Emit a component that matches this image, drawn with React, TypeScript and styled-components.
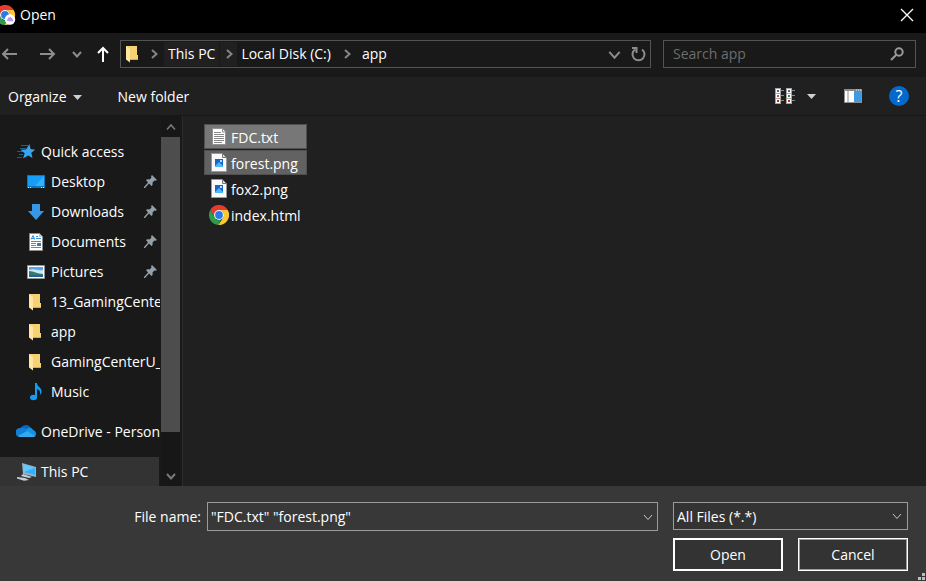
import React from "react";
import styled, { createGlobalStyle } from "styled-components";

const GlobalStyle = createGlobalStyle`
  * { box-sizing: border-box; }
  body { margin: 0; background: #202020; }
  body, button, input, select {
    font-family: "Segoe UI", "Open Sans", "Noto Sans", sans-serif;
    font-size: 14px;
    line-height: 20px;
    color: #fff;
  }
  svg { display: block; flex: none; }
`;

const Dialog = styled.div`
  display: flex;
  flex-direction: column;
  min-height: 100vh;
  position: relative;
  overflow: hidden;
`;

const IconButton = styled.button`
  display: flex;
  align-items: center;
  justify-content: center;
  padding: 0;
  border: 0;
  background: none;
  color: inherit;
  flex: none;
`;

/* Title bar */
const TitleBar = styled.header`
  display: flex;
  align-items: center;
  height: 33px;
  padding: 0 12px 4px 0;
  background: #000;
`;
const Title = styled.h1`
  margin: 0;
  padding-left: 4px;
  flex: 1;
  font-size: 14px;
  font-weight: 400;
`;

/* Navigation bar */
const NavBar = styled.nav`
  display: flex;
  align-items: center;
  height: 44px;
  padding: 0 10px 2px 0;
  background: #191919;
`;
const History = styled.div`
  display: grid;
  grid-template-columns: 18px 24px 10px 12px;
  column-gap: 15px;
  align-items: center;
  justify-items: end;
  margin-right: 11px;
  color: #8d8d8d;
`;
const AddressBar = styled.div`
  display: flex;
  align-items: center;
  flex: 1;
  min-width: 0;
  height: 28px;
  margin-right: 12px;
  padding: 0 4px 0 5px;
  border: 1px solid #535353;
`;
const Crumb = styled.button<{ $lit?: boolean }>`
  height: 24px;
  padding: 0 4px;
  border: 0;
  background: ${(p) => (p.$lit ? "#202020" : "none")};
  white-space: nowrap;
`;
const Separator = styled.span<{ $lit?: boolean }>`
  display: flex;
  align-items: center;
  justify-content: center;
  width: ${(p) => (p.$lit ? 17 : 22)}px;
  height: 24px;
  margin-left: 1px;
  color: #858585;
  background: ${(p) => (p.$lit ? "#202020" : "none")};
`;
const FirstSeparator = styled(Separator)`
  width: 23px;
  padding-left: 3px;
`;
const AddressTools = styled.div`
  display: flex;
  gap: 9px;
  margin-left: auto;
  color: #8d8d8d;
`;
const SearchBox = styled.label`
  display: flex;
  align-items: center;
  width: 253px;
  height: 28px;
  padding: 0 11px 0 9px;
  border: 1px solid #535353;
  color: #9a9a9a;
`;
const SearchInput = styled.input`
  flex: 1;
  min-width: 0;
  padding: 0;
  border: 0;
  outline: 0;
  background: none;
  &::placeholder { color: #6d6d6d; opacity: 1; }
`;

/* Command bar */
const CommandBar = styled.div`
  display: flex;
  align-items: center;
  height: 39px;
  padding: 0 17px 0 8px;
  background: #202020;
  border-bottom: 1px solid #171717;
`;
const Command = styled.button`
  display: flex;
  align-items: center;
  gap: 6px;
  margin-right: 36px;
  padding: 2px 0 0;
  border: 0;
  background: none;
`;
const ViewTools = styled.div`
  display: flex;
  align-items: center;
  margin-left: auto;
`;
const ViewMenu = styled(IconButton)`
  gap: 12px;
  margin-right: 28px;
`;
const Help = styled(IconButton)`
  width: 20px;
  height: 20px;
  margin-left: 27px;
  border-radius: 50%;
  background: #0369cb;
  font-size: 16px;
`;

/* Body */
const Body = styled.div`
  display: flex;
  flex: 1;
`;
const Sidebar = styled.aside`
  display: flex;
  width: 183px;
  flex: none;
  background: #191919;
  border-right: 1px solid #2b2b2b;
`;
const Tree = styled.div`
  flex: 1;
  min-width: 0;
  padding-top: 21px;
  overflow: hidden;
`;
const Group = styled.ul`
  margin: 0 0 10px;
  padding: 0;
  list-style: none;
  &:last-child { margin-bottom: 0; }
`;
const TreeRow = styled.li<{ $child?: boolean; $active?: boolean }>`
  display: flex;
  align-items: center;
  height: ${(p) => (p.$active ? 29 : 30)}px;
  margin-right: ${(p) => (p.$active ? 2 : 1)}px;
  padding-left: ${(p) => (p.$child ? 26 : 16)}px;
  background: ${(p) => (p.$active ? "#333" : "none")};
`;
const TreeLabel = styled.span`
  flex: 1;
  padding-left: 5px;
  overflow: hidden;
  white-space: nowrap;
`;
const PinSlot = styled.span`
  padding: 0 3px 2px 0;
`;
const ScrollBar = styled.div`
  display: flex;
  flex-direction: column;
  width: 19px;
  margin-right: 2px;
  background: #171717;
  color: #7a7a7a;
`;
const ScrollButton = styled(IconButton)`
  height: 21px;
`;
const Thumb = styled.div`
  flex: 296;
  background: #4d4d4d;
`;
const Track = styled.div`
  flex: 33;
`;
const FileArea = styled.main`
  flex: 1;
  padding: 8px 21px;
  background: #202020;
`;
const FileList = styled.ul`
  display: grid;
  grid-auto-rows: 25px;
  gap: 1px;
  width: 103px;
  margin: 0;
  padding: 0;
  list-style: none;
`;
const FileRow = styled.li<{ $tone?: string }>`
  display: flex;
  align-items: center;
  gap: 2px;
  padding-left: 4px;
  border: 1px solid ${(p) => (p.$tone ? "#505050" : "transparent")};
  background: ${(p) => p.$tone ?? "none"};
  white-space: nowrap;
`;
const FileName = styled.span`
  padding-top: 2px;
`;

/* Footer */
const Footer = styled.form`
  display: grid;
  grid-template-columns: 201px minmax(0, 1fr) 235px;
  column-gap: 6px;
  row-gap: 7px;
  align-items: start;
  padding: 16px 18px 10px 0;
  background: #383838;
`;
const FieldLabel = styled.label`
  text-align: right;
  line-height: 29px;
`;
const Combo = styled.div`
  display: flex;
  align-items: center;
  height: 29px;
  margin-right: 9px;
  padding: 0 4px 0 3px;
  border: 1px solid #9b9b9b;
  color: #c8c8c8;
`;
const ComboInput = styled.input`
  flex: 1;
  min-width: 0;
  padding: 0;
  border: 0;
  outline: 0;
  background: none;
`;
const SelectWrap = styled.div`
  display: grid;
  grid-template-columns: minmax(0, 1fr) 15px;
  align-items: center;
  height: 28px;
  border: 1px solid #9b9b9b;
  background: #333;
  color: #c8c8c8;
  svg { grid-area: 1 / 2; pointer-events: none; z-index: 1; }
`;
const Select = styled.select`
  grid-area: 1 / 1 / 2 / 3;
  height: 26px;
  padding: 2px 3px 0;
  border: 0;
  outline: 0;
  appearance: none;
  background: none;
`;
const Actions = styled.div`
  grid-column: 3;
  display: grid;
  grid-template-columns: 1fr 1fr;
  gap: 15px;
`;
const Action = styled.button<{ $primary?: boolean }>`
  height: 33px;
  padding: 0;
  border: ${(p) => (p.$primary ? "2px solid #fff" : "1px solid #fff")};
  box-shadow: ${(p) => (p.$primary ? "none" : "inset 0 0 0 1px #9b9b9b")};
  background: #333;
`;
const Grip = styled.svg`
  position: absolute;
  right: 1px;
  bottom: 1px;
`;

/* Icons */
const Chevron = ({ dir, size = 10, weight = 2 }: { dir: "up" | "down" | "right"; size?: number; weight?: number }) => {
  const d = { up: "M1 7.5 5 3l4 4.5", down: "M1 3l4 4.5L9 3", right: "M3 1l4.5 4L3 9" }[dir];
  return (
    <svg width={size} height={size} viewBox="0 0 10 10" fill="none" stroke="currentColor" strokeWidth={weight}>
      <path d={d} />
    </svg>
  );
};

const Arrow = ({ dir }: { dir: "left" | "right" }) => (
  <svg width="18" height="14" viewBox="0 0 18 14" fill="none" stroke="currentColor" strokeWidth="2">
    <path d={dir === "left" ? "M17 7H3M8 2 3 7l5 5" : "M1 7h14M10 2l5 5-5 5"} />
  </svg>
);

const UpArrow = () => (
  <svg width="12" height="16" viewBox="0 0 12 16" fill="none" stroke="#fff" strokeWidth="2">
    <path d="M6 16V2M1 7l5-5 5 5" />
  </svg>
);

const Triangle = () => (
  <svg width="9" height="5" viewBox="0 0 9 5" fill="#cfcfcf"><path d="M0 0h9L4.5 5z" /></svg>
);

const chromeParts = (
  <>
    <path fill="#e63b2e" d="M1.3 5A10 10 0 0 1 18.7 5H10a5 5 0 0 0-4.3 7.5z" />
    <path fill="#2d9c4b" d="M1.3 5 5.7 12.5a5 5 0 0 0 6.2 2.2L9.3 20A10 10 0 0 1 1.3 5z" />
    <path fill="#fcc934" d="M18.7 5A10 10 0 0 1 9.3 20l5-7.5A5 5 0 0 0 10 5z" />
    <circle cx="10" cy="10" r="5" fill="#fff" />
    <circle cx="10" cy="10" r="3.9" fill="#2c7be5" />
  </>
);
const ChromeIcon = () => <svg width="20" height="20" viewBox="0 0 20 20">{chromeParts}</svg>;
const ProfileChromeIcon = () => (
  <svg width="16" height="20" viewBox="5 0 16 20">
    {chromeParts}
    <circle cx="15" cy="14.5" r="5.2" fill="#fff" />
    <path fill="#b79af0" d="M12 16c0-2 1-2 1-3.500h1.500l1-1 1 1.500c1.500 0 1.500 2 1.500 3.500z" />
  </svg>
);

const FolderIcon = ({ wide = true }: { wide?: boolean }) => (
  <svg width={wide ? 20 : 14} height="18" viewBox={wide ? "0 0 20 18" : "3 0 14 18"}>
    <path fill="#f5d373" d="M3 1h11v9h1v5H6L3 13z" />
    <path fill="#d9a94e" d="M6 14h9v1H6z" />
    <path fill="#ffe6a3" d="M3 1l4 3v13.500l-4-3z" />
  </svg>
);

const StarIcon = () => (
  <svg width="20" height="18" viewBox="0 0 20 18">
    <path stroke="#1b5f8c" fill="none" d="M5 2.500h7M4 5.500h6M1 8.500h6M3 11.500h4M1 14.500h5" />
    <path fill="#35a6f0" d="M13.500 1l1 5 4.700.7-3.900 3 1.200 5.300-4.300-2.600L7 15.500l1.700-5.300L4.500 6.800l5.500-.3z" />
  </svg>
);
const DesktopIcon = () => (
  <svg width="20" height="16" viewBox="0 0 20 16">
    <path fill="#0876c7" d="M1 1h18v13H1z" />
    <path fill="#169df5" d="M2 2h16v10H2z" />
    <path fill="#36b0fb" d="M18 2v10H9z" />
    <path stroke="#bfe6ff" strokeDasharray="1 1" d="M2 13.500h3M15 13.500h3" />
  </svg>
);
const DownloadIcon = () => (
  <svg width="20" height="18" viewBox="0 0 20 18"><path fill="#3597e8" d="M6 1h8v7h4l-8 9-8-9h4z" /></svg>
);
const DocumentIcon = () => (
  <svg width="20" height="20" viewBox="0 0 20 20">
    <path fill="#fff" stroke="#8b8b8b" d="M3.500 1.500h10l3 3v14h-13z" />
    <path fill="#c4c4c4" d="M13 1.500l3.500 3.500H13z" />
    <path stroke="#3292d4" fill="none" d="M5 7.500l2-4 1.500 4M5.500 6.500h3M10 4.500h2M10 6.500h5M5 9.500h10" />
    <path stroke="#77858f" d="M5 11.500h5M5 13.500h5M5 15.500h10" />
    <path fill="#367fb0" d="M11 11h4v3h-4z" />
  </svg>
);
const PicturesIcon = () => (
  <svg width="20" height="16" viewBox="0 0 20 16">
    <path fill="#fff" stroke="#929292" d="M1.500 1.500h17v13h-17z" />
    <path fill="#5aa5e9" d="M3 3h14v10H3z" />
    <path fill="#cae7f8" d="M3 6c5-2 8 1 14 0v4H3z" />
    <path fill="#36796b" d="M3 7c5 0 8 3 14 3v1H3z" />
    <path fill="#23639b" d="M3 11h14v2H3z" />
  </svg>
);
const MusicIcon = () => (
  <svg width="20" height="20" viewBox="0 0 20 20">
    <ellipse cx="7.500" cy="15.500" rx="3.500" ry="2.700" fill="#129cf3" />
    <path fill="#129cf3" d="M9 1h2c0 4 5 4 4.500 9-.1 1.500-1 2.500-1.500 3 .5-3 0-5-3-6v9H9z" />
  </svg>
);
const CloudIcon = () => (
  <svg width="20" height="16" viewBox="0 0 20 16">
    <path fill="#0a67bd" d="M4 6a6 6 0 0 1 11-2l-3 6z" />
    <path fill="#127fd5" d="M4 4c4-1 6 1 9 3l-6 6H4A4.500 4.500 0 0 1 4 4z" />
    <path fill="#1593e3" d="M10 6c2-3 6-3 7 0 4 1 4 7 0 7h-5z" />
    <path fill="#31aaf0" d="M2 12l9-5 8 5c-1 1-2 1-3 1H5c-1 0-2 0-3-1z" />
  </svg>
);
const PcIcon = () => (
  <svg width="20" height="18" viewBox="0 0 20 18">
    <path fill="#9eb3c0" d="M6 0l14 4v10L7 11z" />
    <path fill="#2db2fb" d="M8 1.500l11 3.300v7.200L8 9z" />
    <path fill="#65c9ff" d="M8 1.500l11 3.300L8 9z" />
    <path fill="#c4d0d8" d="M7 11l9 3-3 1-8-2zM1 14l8 1 4 2-5 .8L1 15.500z" />
  </svg>
);
const PinIcon = () => (
  <svg width="13" height="13" viewBox="0 0 13 13" fill="#94a0a8">
    <path d="M8 0l5 5-1.500.8-1-.3-2 2c.5 2 0 3-1 3.500L5 8.500 1 13H0v-1l4-4.500L2 5c1-1 2-1 3.500-.5l2-2L7 1.200z" />
  </svg>
);
const TextIcon = () => (
  <svg width="20" height="20" viewBox="0 0 20 20">
    <path fill="#fff" stroke="#929292" d="M3.500 1.500h10l3 3v13h-13z" />
    <path stroke="#888" fill="none" d="M13.500 2v3H16M5 5.500h7M5 7.500h10M5 9.500h10M5 11.500h10M5 13.500h10M5 15.500h8" />
  </svg>
);
const ImageIcon = () => (
  <svg width="20" height="20" viewBox="0 0 20 20">
    <path fill="#fafafa" stroke="#999" d="M2.500.5h11l4 4v14h-15z" />
    <path fill="#ddd" stroke="#777" d="M13.500.5v4h4z" />
    <path fill="#1668c7" d="M6 6h8v8H6z" />
    <path fill="#4db8ff" d="M6 13l4-4 4 4v1H6z" />
    <circle cx="12" cy="8" r="1" fill="#fff" />
  </svg>
);
const RefreshIcon = () => (
  <svg width="16" height="16" viewBox="0 0 16 16" fill="none" stroke="currentColor" strokeWidth="2">
    <path d="M12 3.500A6 6 0 1 1 5 3.500M2 2h4.500v5" />
  </svg>
);
const SearchIcon = () => (
  <svg width="14" height="14" viewBox="0 0 14 14" fill="none" stroke="currentColor" strokeWidth="2">
    <circle cx="9" cy="5" r="3.700" /><path d="M6.300 7.700 1 13" />
  </svg>
);
const CloseIcon = () => (
  <svg width="14" height="14" viewBox="0 0 14 14" stroke="#fff" strokeWidth="1.300"><path d="M1 1l12 12M13 1 1 13" /></svg>
);
const ListViewIcon = () => (
  <svg width="20" height="16" viewBox="0 0 20 16">
    {[0, 11].map((x) => (
      <g key={x}>
        <path fill="#a5a5a5" d={`M${x} 0h6v16h-6z`} />
        {["#356fa8", "#9b6b35", "#c32621"].map((fill, i) => (
          <g key={fill}>
            <path fill="#fff" d={`M${x + 1} ${1 + i * 5}h4v4h-4z`} />
            <path fill={x && i === 1 ? "#3d8a3e" : fill} d={`M${x + 2} ${2 + i * 5}h2v2h-2z`} />
            <path fill="#888" d={`M${x + 6} ${2 + i * 5}h3v1h-3z`} />
          </g>
        ))}
      </g>
    ))}
  </svg>
);
const PreviewIcon = () => (
  <svg width="18" height="14" viewBox="0 0 18 14">
    <path fill="#8e8e8e" d="M0 0h18v14H0z" />
    <path fill="#fff" d="M1 2h9v11H1z" />
    <path fill="#c6c6c6" d="M3 2h2v11H3z" />
    <path fill="#3d9be6" d="M10 2h7v11h-7z" />
    <path stroke="#ddd" strokeDasharray="1 1" d="M12 1h5" />
  </svg>
);

const places: { label: string; icon: React.ReactNode; pinned?: boolean }[] = [
  { label: "Desktop", icon: <DesktopIcon />, pinned: true },
  { label: "Downloads", icon: <DownloadIcon />, pinned: true },
  { label: "Documents", icon: <DocumentIcon />, pinned: true },
  { label: "Pictures", icon: <PicturesIcon />, pinned: true },
  { label: "13_GamingCenter", icon: <FolderIcon /> },
  { label: "app", icon: <FolderIcon /> },
  { label: "GamingCenterU_", icon: <FolderIcon /> },
  { label: "Music", icon: <MusicIcon /> },
];

const files = [
  { name: "FDC.txt", icon: <TextIcon />, tone: "#777" },
  { name: "forest.png", icon: <ImageIcon />, tone: "#626262" },
  { name: "fox2.png", icon: <ImageIcon /> },
  { name: "index.html", icon: <ChromeIcon /> },
];

export default function App() {
  return (
    <Dialog role="dialog" aria-label="Open">
      <GlobalStyle />
      <TitleBar>
        <ProfileChromeIcon />
        <Title>Open</Title>
        <IconButton aria-label="Close"><CloseIcon /></IconButton>
      </TitleBar>

      <NavBar>
        <History>
          <IconButton aria-label="Back"><Arrow dir="left" /></IconButton>
          <IconButton aria-label="Forward"><Arrow dir="right" /></IconButton>
          <IconButton aria-label="Recent locations"><Chevron dir="down" /></IconButton>
          <IconButton aria-label="Up"><UpArrow /></IconButton>
        </History>
        <AddressBar>
          <FolderIcon wide={false} />
          <FirstSeparator><Chevron dir="right" /></FirstSeparator>
          <Crumb $lit>This PC</Crumb>
          <Separator $lit><Chevron dir="right" /></Separator>
          <Crumb>Local Disk (C:)</Crumb>
          <Separator><Chevron dir="right" /></Separator>
          <Crumb>app</Crumb>
          <AddressTools>
            <IconButton aria-label="Previous locations"><Chevron dir="down" size={13} weight={1.5} /></IconButton>
            <IconButton aria-label="Refresh"><RefreshIcon /></IconButton>
          </AddressTools>
        </AddressBar>
        <SearchBox>
          <SearchInput type="text" placeholder="Search app" aria-label="Search app" />
          <SearchIcon />
        </SearchBox>
      </NavBar>

      <CommandBar>
        <Command>Organize <Triangle /></Command>
        <Command>New folder</Command>
        <ViewTools>
          <ViewMenu aria-label="Change view"><ListViewIcon /><Triangle /></ViewMenu>
          <IconButton aria-label="Preview pane"><PreviewIcon /></IconButton>
          <Help aria-label="Help">?</Help>
        </ViewTools>
      </CommandBar>

      <Body>
        <Sidebar>
          <Tree>
            <Group>
              <TreeRow><StarIcon /><TreeLabel>Quick access</TreeLabel></TreeRow>
              {places.map((p) => (
                <TreeRow key={p.label} $child>
                  {p.icon}
                  <TreeLabel>{p.label}</TreeLabel>
                  {p.pinned && <PinSlot><PinIcon /></PinSlot>}
                </TreeRow>
              ))}
            </Group>
            <Group>
              <TreeRow><CloudIcon /><TreeLabel>OneDrive - Personal</TreeLabel></TreeRow>
            </Group>
            <Group>
              <TreeRow $active><PcIcon /><TreeLabel>This PC</TreeLabel></TreeRow>
            </Group>
          </Tree>
          <ScrollBar>
            <ScrollButton aria-label="Scroll up"><Chevron dir="up" weight={1.5} /></ScrollButton>
            <Thumb />
            <Track />
            <ScrollButton aria-label="Scroll down"><Chevron dir="down" /></ScrollButton>
          </ScrollBar>
        </Sidebar>
        <FileArea>
          <FileList>
            {files.map((f) => (
              <FileRow key={f.name} $tone={f.tone}>{f.icon}<FileName>{f.name}</FileName></FileRow>
            ))}
          </FileList>
        </FileArea>
      </Body>

      <Footer onSubmit={(e) => e.preventDefault()}>
        <FieldLabel htmlFor="file-name">File name:</FieldLabel>
        <Combo>
          <ComboInput id="file-name" type="text" defaultValue={'"FDC.txt" "forest.png"'} />
          <Chevron dir="down" weight={1} />
        </Combo>
        <SelectWrap>
          <Select aria-label="File type" defaultValue="all">
            <option value="all">All Files (*.*)</option>
          </Select>
          <Chevron dir="down" weight={1} />
        </SelectWrap>
        <Actions>
          <Action type="submit" $primary>Open</Action>
          <Action type="button">Cancel</Action>
        </Actions>
      </Footer>
      <Grip width="7" height="7" viewBox="0 0 7 7" fill="#bdbdbd" aria-hidden="true">
        <path d="M4 0h3v3H4zM0 4h3v3H0zM4 4h3v3H4z" />
      </Grip>
    </Dialog>
  );
}
